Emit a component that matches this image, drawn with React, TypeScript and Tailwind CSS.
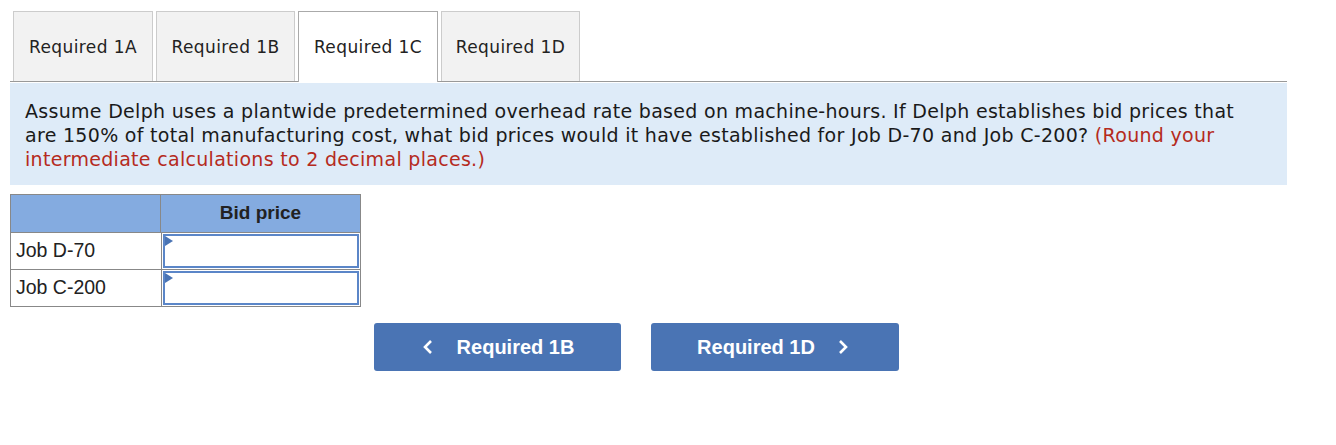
import React from "react";

const tabs = [
  { t: "Required 1A", w: "w-[140px]" },
  { t: "Required 1B", w: "w-[139px]" },
  { t: "Required 1C", w: "w-[140px]" },
  { t: "Required 1D", w: "w-[139px]" },
];

function Flag() {
  return (
    <svg className="absolute left-0 top-0" width="8" height="10" viewBox="0 0 8 10">
      <polygon points="0,0 8,5 0,10" fill="#4a74b4" />
    </svg>
  );
}

export default function App() {
  return (
    <div className="w-[1336px] h-[445px] bg-white relative" style={{ fontFamily: '"DejaVu Sans", Verdana, sans-serif' }}>
      <div className="pt-[11px] pl-[10px] w-[1287px]">
        <div className="flex border-b border-[#999] pl-[3px] h-[71px] items-end">
          {tabs.map((tab, i) => {
            const active = i === 2;
            return (
              <div
                key={tab.t}
                className={
                  active
                    ? `relative -mb-px h-[71px] ${tab.w} mr-[3px] bg-white border border-b-0 border-[#aaa] flex items-center justify-center text-[17px] tracking-[0.4px] text-[#222]`
                    : `h-[70px] ${tab.w} mr-[3px] bg-[#f2f2f2] border border-b-0 border-[#ccc] flex items-center justify-center text-[17px] tracking-[0.4px] text-[#222]`
                }
              >
                <span className={active ? "mt-[1px]" : "mt-[2px]"}>{tab.t}</span>
              </div>
            );
          })}
        </div>
        <div className="mt-[1px] bg-[#deebf8] h-[102px] pl-[15px] pr-[46px] pt-[16px] text-[19px] tracking-[0.3px] leading-[24px] text-[#1a1a1a]">
          Assume Delph uses a plantwide predetermined overhead rate based on machine-hours. If Delph establishes bid prices that are 150% of total manufacturing cost, what bid prices would it have established for Job D-70 and Job C-200?{" "}
          <span className="text-[#b52a20]">(Round your intermediate calculations to 2 decimal places.)</span>
        </div>
      </div>

      <div className="ml-[10px] mt-[9px]" style={{ fontFamily: '"Liberation Sans", Arial, sans-serif' }}>
        <div className="w-[351px] border border-[#888] border-b-0">
          <div className="flex h-[38px] bg-[#84abe0] border-b border-[#888]">
            <div className="w-[150px] border-r border-[#888]"></div>
            <div className="flex-1 flex items-center justify-center font-bold text-[19px] text-[#222]">Bid price</div>
          </div>
          {["Job D-70", "Job C-200"].map((r) => (
            <div key={r} className="flex h-[37px] border-b border-[#888]">
              <div className="w-[151px] border-r border-[#888] flex items-center pl-[5px] text-[19.5px] text-[#222]">{r}</div>
              <div className="flex-1 p-[1px]">
                <div className="relative h-full border-2 border-[#5b86c8] bg-white">
                  <Flag />
                </div>
              </div>
            </div>
          ))}
        </div>

        <div className="flex mt-[16px] ml-[364px] gap-[30px]">
          <button className="w-[247px] h-[48px] rounded-[3px] bg-[#4a74b4] text-white font-bold text-[20px] flex items-center justify-center">
            <svg width="10" height="16" viewBox="0 0 10 16" className="mr-[24px] ml-[4px]">
              <polyline points="8,2 2,8 8,14" fill="none" stroke="white" strokeWidth="2.6" />
            </svg>
            <span className="mr-[2px]">Required 1B</span>
          </button>
          <button className="w-[248px] h-[48px] rounded-[3px] bg-[#4a74b4] text-white font-bold text-[20px] flex items-center justify-center">
            <span className="ml-[7px]">Required 1D</span>
            <svg width="10" height="16" viewBox="0 0 10 16" className="ml-[23px] mr-[12px]">
              <polyline points="2,2 8,8 2,14" fill="none" stroke="white" strokeWidth="2.6" />
            </svg>
          </button>
        </div>
      </div>
    </div>
  );
}
